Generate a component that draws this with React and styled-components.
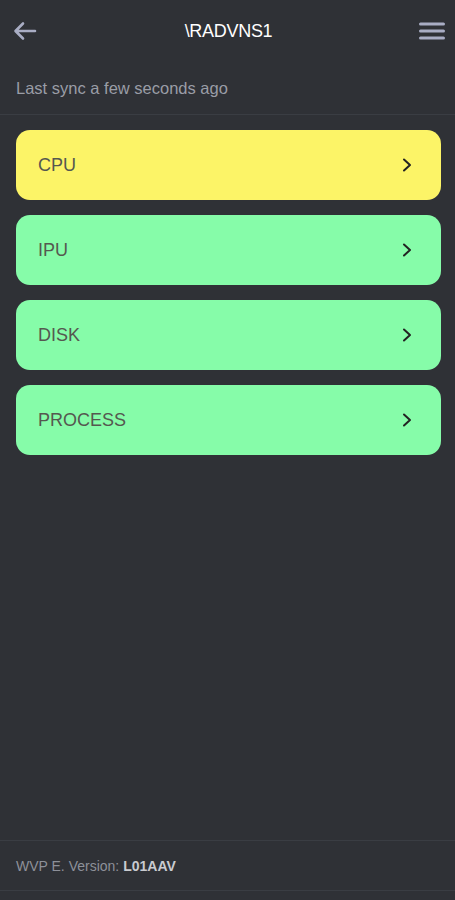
import React from 'react';
import styled, { createGlobalStyle } from 'styled-components';

const GlobalStyle = createGlobalStyle`
  html, body {
    margin: 0;
    padding: 0;
    background: #2f3136;
  }
  body {
    font-family: "Liberation Sans", Arial, sans-serif;
  }
`;

const items = [
  { label: 'CPU', tone: 'warn' },
  { label: 'IPU', tone: 'ok' },
  { label: 'DISK', tone: 'ok' },
  { label: 'PROCESS', tone: 'ok' },
];

const tones = {
  warn: '#fcf467',
  ok: '#86fca9',
};

function BackIcon() {
  return (
    <svg width="24" height="20" viewBox="0 0 24 20" fill="none">
      <path
        d="M22 10H3M10 2.5L2.5 10L10 17.5"
        stroke="#a9adc4"
        strokeWidth="2.6"
        strokeLinecap="round"
        strokeLinejoin="round"
      />
    </svg>
  );
}

function MenuIcon() {
  return (
    <svg width="26" height="20" viewBox="0 0 26 20" fill="none">
      <path
        d="M1.5 3H24.5M1.5 10H24.5M1.5 17H24.5"
        stroke="#a9adc4"
        strokeWidth="3"
        strokeLinecap="round"
      />
    </svg>
  );
}

function Chevron() {
  return (
    <svg width="12" height="16" viewBox="0 0 12 16" fill="none">
      <path
        d="M3 2.5L9 8L3 13.5"
        stroke="#222"
        strokeWidth="2"
        strokeLinecap="round"
        strokeLinejoin="round"
      />
    </svg>
  );
}

function App() {
  return (
    <Page>
      <GlobalStyle />
      <Header>
        <IconButton>
          <BackIcon />
        </IconButton>
        <Title>\RADVNS1</Title>
        <IconButton>
          <MenuIcon />
        </IconButton>
      </Header>
      <Sync>Last sync a few seconds ago</Sync>
      <List>
        {items.map(item => (
          <Card key={item.label} $tone={item.tone}>
            <CardLabel>{item.label}</CardLabel>
            <Chevron />
          </Card>
        ))}
      </List>
      <Footer>
        WVP E. Version: <strong>L01AAV</strong>
      </Footer>
      <BottomSpace />
    </Page>
  );
}

const Page = styled.div`
  width: 455px;
  height: 900px;
  background: #2f3136;
  display: flex;
  flex-direction: column;
  overflow: hidden;
`;

const Header = styled.div`
  height: 62px;
  display: flex;
  align-items: center;
  justify-content: space-between;
  padding: 0 10px 0 12px;
`;

const IconButton = styled.div`
  width: 26px;
  height: 24px;
  display: flex;
  align-items: center;
  justify-content: center;
`;

const Title = styled.div`
  color: #ffffff;
  font-size: 18px;
  letter-spacing: -0.3px;
`;

const Sync = styled.div`
  height: 53px;
  box-sizing: border-box;
  padding: 17px 16px 0;
  color: #9a9da6;
  font-size: 16.5px;
  border-bottom: 1px solid #3a3d43;
`;

const List = styled.div`
  flex: 1;
  display: flex;
  flex-direction: column;
  gap: 15px;
  padding: 15px 14px 0 16px;
`;

const Card = styled.div`
  height: 70px;
  box-sizing: border-box;
  border-radius: 14px;
  background: ${p => tones[p.$tone]};
  display: flex;
  align-items: center;
  justify-content: space-between;
  padding: 0 28px 0 22px;
`;

const CardLabel = styled.span`
  color: #555850;
  font-size: 18px;
`;

const Footer = styled.div`
  height: 51px;
  box-sizing: border-box;
  border-top: 1px solid #3a3d43;
  border-bottom: 1px solid #3a3d43;
  display: flex;
  align-items: center;
  gap: 4px;
  padding: 0 16px;
  color: #8d9099;
  font-size: 14px;
  strong {
    color: #c9cbd0;
  }
`;

const BottomSpace = styled.div`
  height: 9px;
`;

export default App;
